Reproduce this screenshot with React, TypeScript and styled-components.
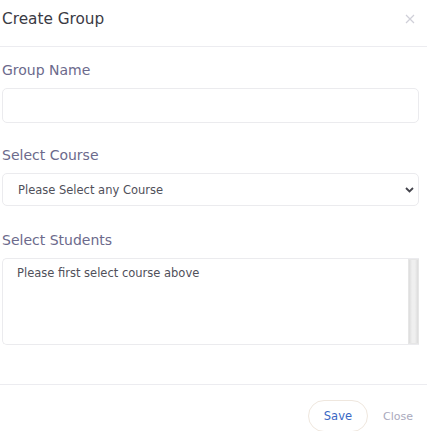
import React from "react";
import styled, { createGlobalStyle } from "styled-components";

const Global = createGlobalStyle`
  html, body { margin: 0; padding: 0; background: #fff; }
  body { font-family: "DejaVu Sans", "Noto Sans", sans-serif; }
  * { box-sizing: border-box; }
`;

const Modal = styled.div`
  width: 427px;
  display: flex;
  flex-direction: column;
  background: #fff;
`;

const Header = styled.div`
  height: 47px;
  display: flex;
  align-items: center;
  justify-content: space-between;
  padding: 0 10px 8px 2px;
  border-bottom: 1px solid #ececf0;
`;

const Title = styled.h5`
  margin: 0;
  font-size: 15.3px;
  font-weight: 400;
  color: #3a3a44;
`;

const CloseX = styled.button`
  border: 0;
  background: none;
  padding: 0;
  width: 14px;
  height: 14px;
  display: flex;
  align-items: center;
  justify-content: center;
  cursor: pointer;
`;

const Body = styled.div`
  display: flex;
  flex-direction: column;
  padding: 13px 8px 39px 2px;
`;

const Field = styled.div<{ $gap?: number }>`
  display: flex;
  flex-direction: column;
  margin-bottom: ${(p) => p.$gap ?? 22}px;
  &:last-child { margin-bottom: 0; }
`;

const Label = styled.label`
  font-size: 14px;
  line-height: 20px;
  color: #6c6a8c;
  margin-bottom: 8px;
`;

const Input = styled.input`
  height: 35px;
  border: 1px solid #ebebee;
  border-radius: 5px;
  outline: none;
  padding: 0 14px;
  font: inherit;
`;

const SelectBox = styled.div`
  height: 33px;
  border: 1px solid #ebebee;
  border-radius: 5px;
  display: flex;
  align-items: center;
  justify-content: space-between;
  padding: 0 4px 0 15px;
  font-size: 11.5px;
  color: #50505a;
`;

const ListBox = styled.div`
  height: 87px;
  border: 1px solid #ebebee;
  border-right: 0;
  border-radius: 5px 0 0 5px;
  display: flex;
`;

const ListContent = styled.div`
  flex: 1;
  padding: 7px 14px;
  font-size: 11.5px;
  color: #50505a;
`;

const Track = styled.div`
  width: 11px;
  border: 1px solid #e6e6e6;
  background: linear-gradient(90deg, #dcdcdc 0%, #efefef 35%, #efefef 65%, #dcdcdc 100%);
`;

const Footer = styled.div`
  border-top: 1px solid #ececf0;
  display: flex;
  justify-content: flex-end;
  align-items: center;
  gap: 4px;
  padding: 15px 3px 0 0;
`;

const Btn = styled.button<{ $primary?: boolean }>`
  font: inherit;
  font-size: ${(p) => (p.$primary ? 11.5 : 11)}px;
  height: 32px;
  padding: 0 ${(p) => (p.$primary ? 15 : 10)}px;
  border-radius: 16px;
  background: #fff;
  cursor: pointer;
  border: 1px solid ${(p) => (p.$primary ? "#efe7de" : "transparent")};
  color: ${(p) => (p.$primary ? "#3a68c4" : "#a9a9bd")};
`;

export default function App() {
  return (
    <>
      <Global />
      <Modal>
        <Header>
          <Title>Create Group</Title>
          <CloseX aria-label="close">
            <svg width="10" height="10" viewBox="0 0 10 10">
              <path d="M1 1L9 9M9 1L1 9" stroke="#cfcfd8" strokeWidth="1.2" />
            </svg>
          </CloseX>
        </Header>
        <Body>
          <Field>
            <Label>Group Name</Label>
            <Input />
          </Field>
          <Field $gap={24}>
            <Label>Select Course</Label>
            <SelectBox>
              <span>Please Select any Course</span>
              <svg width="9" height="6" viewBox="0 0 9 6">
                <path d="M1 1L4.5 4.5L8 1" stroke="#44444c" strokeWidth="1.8" fill="none" />
              </svg>
            </SelectBox>
          </Field>
          <Field>
            <Label>Select Students</Label>
            <ListBox>
              <ListContent>Please first select course above</ListContent>
              <Track />
            </ListBox>
          </Field>
        </Body>
        <Footer>
          <Btn $primary>Save</Btn>
          <Btn>Close</Btn>
        </Footer>
      </Modal>
    </>
  );
}
